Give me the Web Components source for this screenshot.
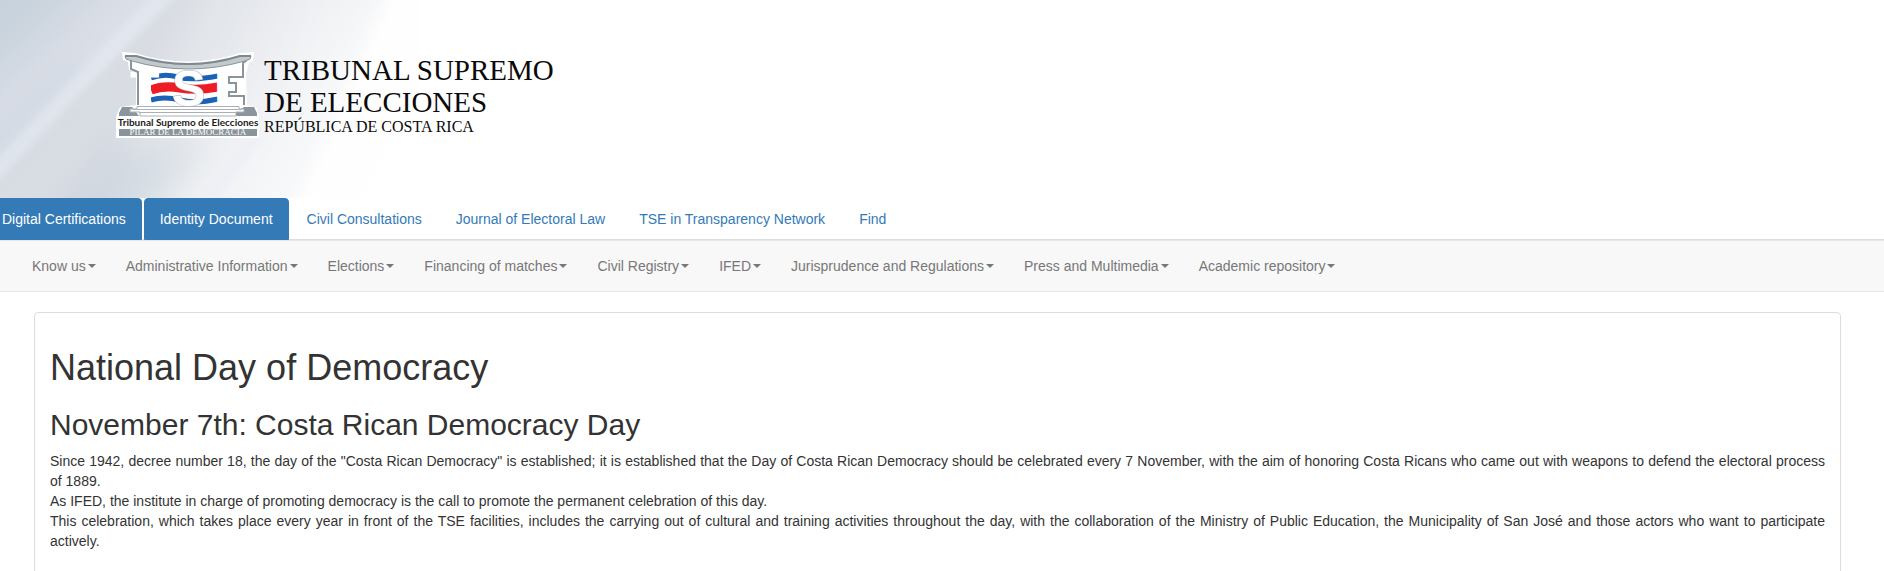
<!DOCTYPE html>
<html lang="en">
<head>
<meta charset="utf-8">
<meta name="viewport" content="width=device-width, initial-scale=1">
<title>National Day of Democracy - Tribunal Supremo de Elecciones</title>
<style>
  body { margin: 0; background: #fff; color: #333; font: 14px/20px "Liberation Sans", Arial, sans-serif; }
</style>
</head>
<body>
<tse-header></tse-header>
<tse-tabs>
  <tse-tab active>Digital Certifications</tse-tab>
  <tse-tab active>Identity Document</tse-tab>
  <tse-tab>Civil Consultations</tse-tab>
  <tse-tab>Journal of Electoral Law</tse-tab>
  <tse-tab>TSE in Transparency Network</tse-tab>
  <tse-tab>Find</tse-tab>
</tse-tabs>
<tse-navbar>
  <tse-menu>Know us</tse-menu>
  <tse-menu>Administrative Information</tse-menu>
  <tse-menu>Elections</tse-menu>
  <tse-menu>Financing of matches</tse-menu>
  <tse-menu>Civil Registry</tse-menu>
  <tse-menu>IFED</tse-menu>
  <tse-menu>Jurisprudence and Regulations</tse-menu>
  <tse-menu>Press and Multimedia</tse-menu>
  <tse-menu>Academic repository</tse-menu>
</tse-navbar>
<tse-article>
  <span slot="title">National Day of Democracy</span>
  <span slot="subtitle">November 7th: Costa Rican Democracy Day</span>
  Since 1942, decree number 18, the day of the "Costa Rican Democracy" is established; it is established that the Day of Costa Rican Democracy should be celebrated every 7 November, with the aim of honoring Costa Ricans who came out with weapons to defend the electoral process of 1889.<br>
  As IFED, the institute in charge of promoting democracy is the call to promote the permanent celebration of this day.<br>
  This celebration, which takes place every year in front of the TSE facilities, includes the carrying out of cultural and training activities throughout the day, with the collaboration of the Ministry of Public Education, the Municipality of San José and those actors who want to participate actively.
</tse-article>

<script>
const define = (name, html) => {
  const template = document.createElement('template');
  template.innerHTML = html;
  customElements.define(name, class extends HTMLElement {
    constructor() {
      super();
      this.attachShadow({ mode: 'open' }).append(template.content.cloneNode(true));
    }
  });
};

define('tse-logo', `
  <style>
    :host { display: block; }
    svg { display: block; }
  </style>
  <svg width="144" height="88" viewBox="116 51 144 88" role="img" aria-label="TSE">
    <!-- white halo -->
    <path fill="#fff" d="M122 52 L135 53 Q188 70 240 53 L254 52 L253 61 L249 63 L246 75 L247 105 L257 108 L259 117 L259 138 L116 138 L116 117 L120 107 L136 105 L136 73 L129 70 L128 62 L123 60 Z"/>
    <!-- flag -->
    <g fill="none" stroke-width="5">
      <path stroke="#1b62b5" d="M151 78 Q164 73 178 77 T218 76"/>
      <path stroke="#ee1d25" stroke-width="9" d="M151 90 Q164 85 180 88 T218 87"/>
      <path stroke="#1b62b5" d="M151 100 Q164 96 180 100 T218 99"/>
    </g>
    <path fill="#fff" d="M134 62 Q147 68 159 70 V75 H151 V104 H140 V70 H134 Z"/>
    <g font-family="Liberation Sans, Arial, sans-serif" font-weight="bold" fill="#fff">
      <text x="130" y="105" font-size="48">T</text>
      <text x="172" y="106" font-size="50" stroke="#aab2b8" stroke-width="1" paint-order="stroke">S</text>
      <text x="214" y="105" font-size="48">E</text>
    </g>
    <!-- walls -->
    <path fill="none" stroke="#89949b" stroke-width="2" d="M131 60 V69 L138 72 V105 M247 60 L243 63 V77 H229 V83 H236 V92 H229 V96 H244 V105"/>
    <!-- roof -->
    <path fill="#c3c9cd" stroke="#89949b" stroke-width="1" d="M125 56 H136 Q188 73 240 56 H251 L250 59 L245 61 Q188 77 132 61 L126 59 Z"/>
    <path fill="none" stroke="#7d8a92" stroke-width="2" d="M125 56 H136 Q188 72 240 56 H251"/>
    <!-- steps -->
    <path fill="#8a959d" d="M122 107 H132 L139 116 H119 V113 Z M254 107 H244 L230 116 H257 V113 Z"/>
    <path fill="#fff" stroke="#a9b1b7" d="M137 106.500 H239 V109 H244 V112 H236 V116 H140 V112 H130 V109 H137 Z"/>
    <path stroke="#a9b1b7" d="M133 109.500 H242 M139 112.500 H236"/>
    <text x="188" y="126" text-anchor="middle" font-family="Lato, sans-serif" font-weight="bold" font-size="10" fill="#1c1c1c">Tribunal Supremo de Elecciones</text>
    <path fill="#89949b" d="M119 129 H257 V136 H119 Z"/>
    <text x="188" y="135" text-anchor="middle" font-family="Liberation Serif, serif" font-size="9" fill="#fff">PILAR DE LA DEMOCRACIA</text>
  </svg>`);

define('tse-header', `
  <style>
    :host { display: block; position: relative; overflow: hidden; }
    .bg { position: absolute; left: 0; top: 0; }
    header { position: relative; display: flex; align-items: center; gap: 4px; padding: 51px 0 59px 116px; }
    .name { color: #0a0a0a; font-family: "Liberation Serif", serif; font-size: 29px; line-height: 32px; white-space: nowrap; }
    .country { font-size: 16px; line-height: 18px; }
  </style>
  <svg class="bg" width="420" height="198" viewBox="0 0 420 198" aria-hidden="true">
    <defs>
      <linearGradient id="sky" gradientUnits="userSpaceOnUse" x1="0" y1="0" x2="205" y2="215">
        <stop offset="0" stop-color="#c6d1dc"/>
        <stop offset=".14" stop-color="#cdd6df"/>
        <stop offset=".26" stop-color="#d8dce5"/>
        <stop offset=".39" stop-color="#dde1e9"/>
        <stop offset=".42" stop-color="#d9dde3"/>
        <stop offset=".6" stop-color="#d8dce3"/>
        <stop offset="1" stop-color="#e2e5ea"/>
      </linearGradient>
      <linearGradient id="right" gradientUnits="userSpaceOnUse" x1="145" y1="60" x2="375" y2="180">
        <stop offset="0" stop-color="#fff" stop-opacity="0"/>
        <stop offset=".15" stop-color="#fff" stop-opacity=".25"/>
        <stop offset=".5" stop-color="#fff" stop-opacity=".55"/>
        <stop offset="1" stop-color="#fff"/>
      </linearGradient>
      <filter id="soft" x="-30%" y="-30%" width="160%" height="160%"><feGaussianBlur stdDeviation="3"/></filter>
      <filter id="wide" x="-50%" y="-50%" width="200%" height="200%"><feGaussianBlur stdDeviation="16"/></filter>
      <filter id="edge" x="-20%" y="-20%" width="140%" height="140%"><feGaussianBlur stdDeviation="7"/></filter>
    </defs>
    <path fill="url(#sky)" d="M0 0 H420 V198 H0 Z"/>
    <path fill="#b9c6d2" opacity=".7" filter="url(#wide)" d="M60 225 L120 150 L210 140 L150 225 Z"/>
    <path fill="#c4d3df" opacity=".6" filter="url(#wide)" d="M-20 150 L75 60 L90 70 L-20 190 Z"/>
    <path fill="#e4e8f0" opacity=".7" filter="url(#soft)" d="M151 -4 H173 L-6 186 V162 Z"/>
    <path fill="url(#right)" d="M0 0 H420 V198 H0 Z"/>
    <path fill="#eceff6" opacity=".8" filter="url(#soft)" d="M248 138 H264 L214 204 H194 Z"/>
    <path fill="#fff" opacity=".9" filter="url(#edge)" d="M396 -20 L290 220 H460 V-20 Z"/>
  </svg>
  <header>
    <tse-logo></tse-logo>
    <div class="name">
      <div>TRIBUNAL SUPREMO</div>
      <div>DE ELECCIONES</div>
      <div class="country">REPÚBLICA DE COSTA RICA</div>
    </div>
  </header>`);

define('tse-tabs', `
  <style>
    :host { display: block; overflow-x: clip; border-bottom: 1px solid #ddd; }
    nav { display: flex; gap: 2px; margin: 0 0 -1px -14px; }
  </style>
  <nav><slot></slot></nav>`);

define('tse-tab', `
  <style>
    :host { display: block; }
    a { display: block; padding: 10px 15px; border: 1px solid transparent; border-radius: 4px 4px 0 0; color: #337ab7; text-decoration: none; white-space: nowrap; }
    :host([active]) a { color: #fff; background: #337ab7; border-color: #337ab7; }
  </style>
  <a href="#"><slot></slot></a>`);

define('tse-navbar', `
  <style>
    :host { display: block; margin-bottom: 20px; background: #f8f8f8; border: solid #e7e7e7; border-width: 1px 0; }
    nav { display: flex; flex-wrap: wrap; padding-left: 17px; }
  </style>
  <nav><slot></slot></nav>`);

define('tse-menu', `
  <style>
    :host { display: block; }
    a { display: flex; align-items: center; gap: 2px; padding: 15px; color: #777; text-decoration: none; white-space: nowrap; }
    a::after { content: ""; border: 4px solid transparent; border-top-color: currentColor; border-bottom: 0; }
  </style>
  <a href="#"><slot></slot></a>`);

define('tse-article', `
  <style>
    :host { display: block; padding: 0 43px 20px 34px; }
    article { min-height: 300px; padding: 15px; border: 1px solid #ddd; border-radius: 4px; background: #fff; box-sizing: border-box; }
    h1, h2 { margin: 20px 0 10px; font-weight: 500; }
    h1 { font-size: 36px; line-height: 40px; }
    h2 { font-size: 30px; line-height: 33px; }
    p { margin: 0 0 10px; text-align: justify; }
  </style>
  <article>
    <h1><slot name="title"></slot></h1>
    <h2><slot name="subtitle"></slot></h2>
    <p><slot></slot></p>
  </article>`);
</script>
</body>
</html>
